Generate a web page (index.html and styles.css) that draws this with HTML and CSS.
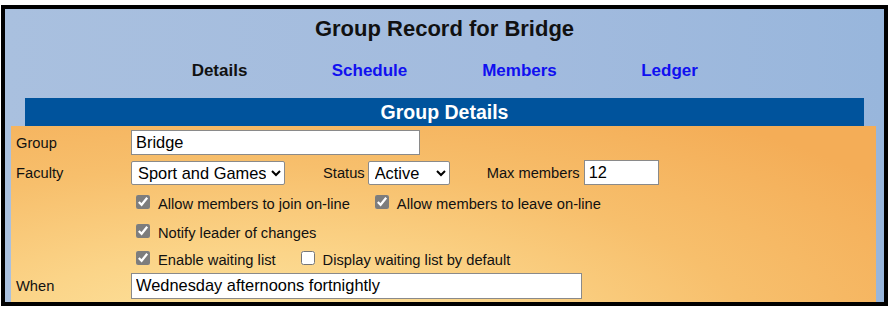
FILE: index.html
```html
<!DOCTYPE html>
<html lang="en">
<head>
    <meta charset="UTF-8">
    <title>Group Record</title>
    <link rel="stylesheet" href="styles.css">
</head>
<body>

<div class="frame">
    <h1>Group Record for Bridge</h1>

    <table class="tabs">
        <tr>
            <td class="current">Details</td>
            <td><a href="#">Schedule</a></td>
            <td><a href="#">Members</a></td>
            <td><a href="#">Ledger</a></td>
        </tr>
    </table>

    <div class="bar">Group Details</div>

    <div class="panel">
        <div class="row">
            <label class="lbl" for="group">Group</label>
            <input type="text" id="group" class="txt group-name" value="Bridge">
        </div>
        <div class="row">
            <label class="lbl" for="faculty">Faculty</label>
            <select id="faculty" class="sel faculty">
                <option>Sport and Games</option>
            </select>
            <label class="inline-lbl status-lbl" for="status">Status</label>
            <select id="status" class="sel status">
                <option>Active</option>
            </select>
            <label class="inline-lbl max-lbl" for="max">Max members</label>
            <input type="text" id="max" class="txt max" value="12">
        </div>
        <div class="row checks first">
            <span class="lbl"></span>
            <label class="check"><input type="checkbox" checked> Allow members to join on-line</label>
            <label class="check"><input type="checkbox" checked> Allow members to leave on-line</label>
        </div>
        <div class="row checks second">
            <span class="lbl"></span>
            <label class="check"><input type="checkbox" checked> Notify leader of changes</label>
        </div>
        <div class="row checks">
            <span class="lbl"></span>
            <label class="check"><input type="checkbox" checked> Enable waiting list</label>
            <label class="check"><input type="checkbox"> Display waiting list by default</label>
        </div>
        <div class="row">
            <label class="lbl" for="when">When</label>
            <input type="text" id="when" class="txt when" value="Wednesday afternoons fortnightly">
        </div>
    </div>
</div>

</body>
</html>
```

FILE: styles.css
```css
body {
    margin: 0;
    font-family: Arial, "Liberation Sans", sans-serif;
    background-color: white;
}
.frame {
    margin: 5px 0 0 1px;
    height: 301px;
    box-sizing: border-box;
    border: 4px solid black;
    padding: 0 6px 0 6px;
    background: linear-gradient(to right, #a9c0df, #a2bbde 60%, #98b6dc);
    overflow: hidden;
}
h1 {
    text-align: center;
    font-size: 22px;
    color: #111;
    margin: 0;
    padding-top: 7px;
    height: 34px;
    box-sizing: border-box;
}
.tabs {
    width: 600px;
    margin: 18px auto 0 auto;
    border-collapse: collapse;
    table-layout: fixed;
}
.tabs td {
    text-align: center;
    font-weight: bold;
    font-size: 17px;
    padding: 0;
    height: 32px;
    vertical-align: top;
    color: #111;
}
.tabs a {
    color: #1010f0;
    text-decoration: none;
}
.bar {
    margin: 5px 14px 0 14px;
    height: 28px;
    line-height: 28px;
    background-color: #00539c;
    color: white;
    font-weight: bold;
    font-size: 19.5px;
    text-align: center;
}
.panel {
    background: radial-gradient(ellipse 90% 140% at 28% 110%, #fde8a6 0%, #fbd488 35%, #f7bf6c 65%, #f4ad57 100%);
    padding: 4px 0 10px 5px;
    margin-right: 2px;
    height: 190px;
    font-size: 14.7px;
    color: #111;
}
.row {
    display: flex;
    align-items: center;
    height: 25px;
    margin-bottom: 5px;
}
.lbl {
    width: 115px;
    flex-shrink: 0;
}
.txt, .sel {
    font-family: Arial, "Liberation Sans", sans-serif;
    font-size: 16.4px;
    height: 25px;
    box-sizing: border-box;
    border: 1px solid #8a8a8a;
    background-color: white;
    color: #000;
    padding: 1px 4px;
}
.sel {
    height: 24px;
    padding: 0 2px;
    border-radius: 2px;
}
.group-name {
    width: 289px;
}
.faculty {
    width: 154px;
}
.status {
    width: 82px;
}
.max {
    width: 75px;
}
.when {
    width: 451px;
    height: 26px;
}
.inline-lbl {
    margin-right: 5px;
}
.status-lbl {
    margin-left: 38px;
}
.status-lbl + .sel {
    margin-left: -2px;
}
.max-lbl {
    margin-left: 37px;
    margin-right: 4px;
}
.checks {
    height: 27px;
    margin-bottom: 0;
}
.checks.first {
    margin-top: 5px;
    margin-bottom: 2px;
}
.check {
    display: flex;
    align-items: center;
    margin-left: 5px;
    margin-right: 20px;
}
.check input {
    accent-color: #7d7d7d;
    width: 14px;
    height: 14px;
    margin: 0 8px 4px 0;
}
```
